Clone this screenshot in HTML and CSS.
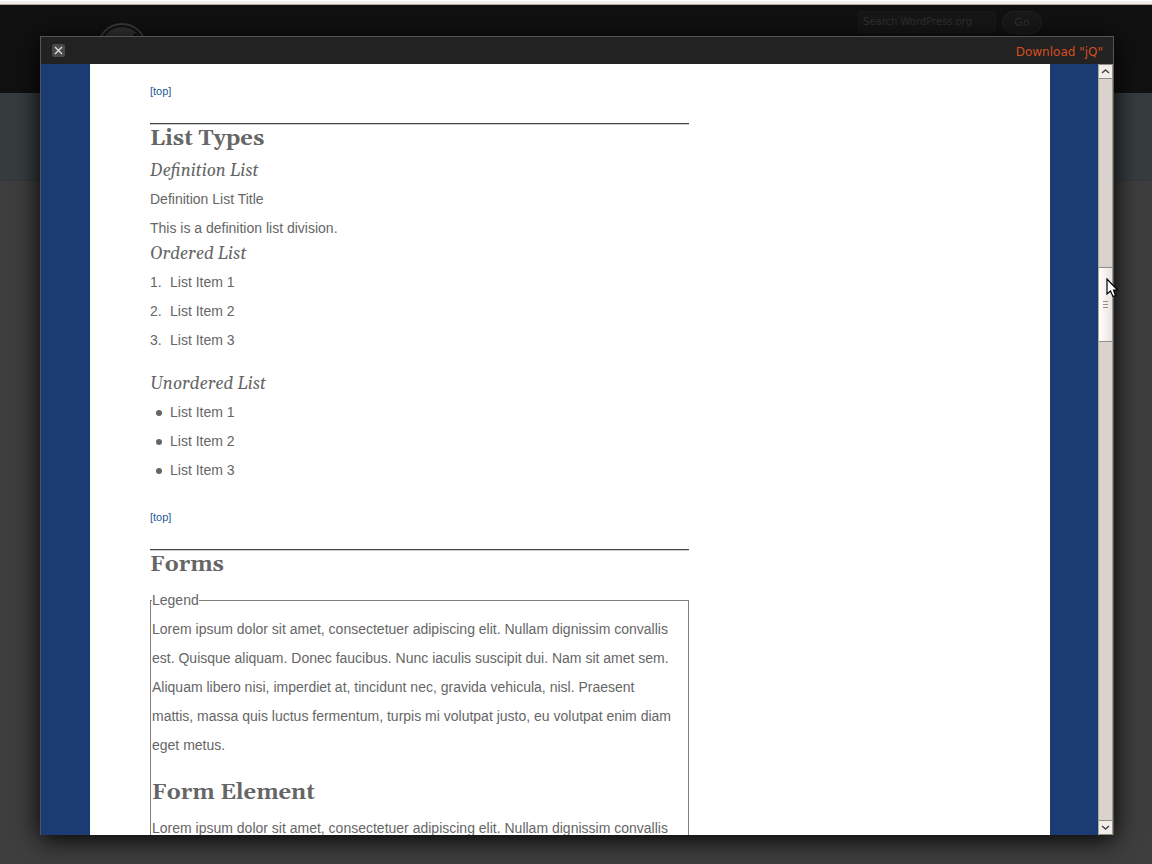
FILE: index.html
```
<!DOCTYPE html>
<html lang="en">
<head>
  <meta charset="UTF-8">
  <meta name="viewport" content="width=device-width, initial-scale=1.0">
  <title>Theme Preview</title>
  <link rel="stylesheet" href="styles.css">
</head>
<body>

  <!-- Site behind the preview -->
  <header class="site-header">
    <svg class="logo" viewBox="0 0 50 50" aria-hidden="true">
      <circle cx="25" cy="25" r="24" fill="#111" stroke="#3a3a3a" stroke-width="2"/>
      <circle cx="25" cy="25" r="21" fill="#333"/>
      <path d="M36 12 q3-3 5 0 l3 10 h-6 z" fill="#111"/>
    </svg>
    <form class="search">
      <input type="text" placeholder="Search WordPress.org" aria-label="Search WordPress.org">
      <button type="button">Go</button>
    </form>
  </header>
  <div class="site-headline"></div>

  <!-- Preview window -->
  <div class="preview">
    <div class="preview-bar">
      <button class="close-btn" type="button" aria-label="Close">
        <svg viewBox="0 0 13 13"><path d="M3 3 L10 10 M10 3 L3 10" stroke="#ddd" stroke-width="1.400" fill="none"/></svg>
      </button>
      <a class="download" href="#">Download "jQ"</a>
    </div>

    <div class="frame">
      <div class="viewport">
        <div class="page">
          <main class="content">
            <p class="top"><a href="#">[top]</a></p>
            <hr>
            <h2>List Types</h2>

            <h3>Definition List</h3>
            <dl>
              <dt>Definition List Title</dt>
              <dd>This is a definition list division.</dd>
            </dl>

            <h3>Ordered List</h3>
            <ol>
              <li>List Item 1</li>
              <li>List Item 2</li>
              <li>List Item 3</li>
            </ol>

            <h3>Unordered List</h3>
            <ul>
              <li>List Item 1</li>
              <li>List Item 2</li>
              <li>List Item 3</li>
            </ul>

            <p class="top"><a href="#">[top]</a></p>
            <hr>
            <h2>Forms</h2>

            <fieldset>
              <legend>Legend</legend>
              <p>Lorem ipsum dolor sit amet, consectetuer adipiscing elit. Nullam dignissim convallis est. Quisque aliquam. Donec faucibus. Nunc iaculis suscipit dui. Nam sit amet sem. Aliquam libero nisi, imperdiet at, tincidunt nec, gravida vehicula, nisl. Praesent mattis, massa quis luctus fermentum, turpis mi volutpat justo, eu volutpat enim diam eget metus.</p>
              <h2>Form Element</h2>
              <p>Lorem ipsum dolor sit amet, consectetuer adipiscing elit. Nullam dignissim convallis</p>
            </fieldset>
          </main>
        </div>
      </div>

      <div class="scrollbar">
        <button class="arrow" type="button" aria-label="Scroll up">
          <svg viewBox="0 0 9 9"><path d="M1 6 L4.500 3 L8 6" stroke="#444" stroke-width="1.500" fill="none"/></svg>
        </button>
        <div class="track-above"></div>
        <div class="thumb">
          <span></span><span></span><span></span>
          <svg class="cursor" viewBox="0 0 14 20" aria-hidden="true">
            <path d="M1 1 V16 L4.500 13 L7 18.500 L9.500 17.500 L7.500 12 H11.500 Z" fill="#fff" stroke="#000" stroke-width="1.200"/>
          </svg>
        </div>
        <div class="track-below"></div>
        <button class="arrow" type="button" aria-label="Scroll down">
          <svg viewBox="0 0 9 9"><path d="M1 3 L4.500 6 L8 3" stroke="#444" stroke-width="1.500" fill="none"/></svg>
        </button>
      </div>
    </div>
  </div>

</body>
</html>
```
FILE: styles.css
```
* {
  box-sizing: border-box;
}

html {
  overflow: hidden;
  border-top: 1px solid #fff;
  background: #3e3e3e;
}

body {
  margin: 0;
  border-top: 3px solid #f1efeb;
  font-family: "Liberation Sans", Arial, sans-serif;
}

/* Site behind the preview */
.site-header {
  display: flex;
  justify-content: space-between;
  align-items: flex-start;
  height: 89px;
  padding: 6px 110px 0 97px;
  background: #111;
  border-top: 1px solid #b5a899;
}

.logo {
  width: 50px;
  height: 50px;
  margin-top: 12px;
}

.search {
  display: flex;
  gap: 6px;
}

.search input {
  width: 138px;
  height: 22px;
  padding: 0 4px 2px;
  background: #161616;
  border: 1px solid #191919;
  border-radius: 2px;
  font: 10px "DejaVu Sans", sans-serif;
}

.search input::placeholder {
  color: #303030;
}

.search button {
  width: 40px;
  height: 23px;
  padding: 0;
  background: #181818;
  border: 1px solid #222;
  border-radius: 12px;
  color: #303030;
  font: 11px "DejaVu Sans", sans-serif;
}

.site-headline {
  height: 88px;
  background: #373c3f;
  border-bottom: 1px solid #31373b;
}

/* Preview window */
.preview {
  position: absolute;
  top: 36px;
  right: 38px;
  bottom: 29px;
  left: 40px;
  display: flex;
  flex-direction: column;
  border: 1px solid #555;
  border-bottom: none;
  box-shadow: 0 4px 24px #000;
}

.preview-bar {
  display: flex;
  flex: none;
  justify-content: space-between;
  align-items: center;
  height: 27px;
  padding: 0 10px 0 11px;
  background: #222;
}

.close-btn {
  width: 13px;
  height: 13px;
  padding: 0;
  background: #4a4a4a;
  border: none;
  border-radius: 2px;
}

.close-btn svg {
  display: block;
}

.download {
  padding-top: 2px;
  color: #d54e21;
  font: 12px "DejaVu Sans", sans-serif;
  text-decoration: none;
}

.frame {
  display: flex;
  flex: 1;
  min-height: 0;
}

.viewport {
  flex: 1;
  padding-left: 1px;
  overflow: hidden;
  background: #1a3c73;
}

.page {
  max-width: 960px;
  min-height: 100%;
  margin: 0 auto;
  padding: 13px 60px;
  background: #fff;
}

.content {
  max-width: 539px;
  color: #666;
  font-size: 14px;
  line-height: 29px;
}

.content p {
  margin: 0 0 19px;
}

.content .top {
  margin-bottom: 17px;
  font-size: 11px;
}

.top a {
  color: #1c5a96;
  text-decoration: none;
}

hr {
  height: 2px;
  margin: 0;
  border: none;
  border-top: 1px solid #444;
  border-bottom: 1px solid #ccc;
}

h2 {
  margin: 0 0 8px;
  padding-top: 1px;
  font: bold 22px/26px Georgia, Gelasio, "Liberation Serif", serif;
}

h3 {
  margin: 0 0 2px;
  font: italic 17px/23px Georgia, Gelasio, "Liberation Serif", serif;
}

dl,
dd {
  margin: 0;
}

ol,
ul {
  margin: 0 0 18px;
  padding: 0;
  list-style: none;
}

ol {
  counter-reset: item;
}

li {
  display: flex;
  align-items: center;
}

ol li::before {
  content: counter(item) ".";
  counter-increment: item;
  width: 20px;
}

ul li::before {
  content: "";
  width: 6px;
  height: 6px;
  margin: 0 8px 0 6px;
  border-radius: 50%;
  background: #666;
}

fieldset {
  margin: 0;
  padding: 0 1px;
  border: 1px solid #857f79;
}

fieldset p {
  padding-right: 10px;
}

legend {
  padding: 0;
}

/* Scrollbar */
.scrollbar {
  display: flex;
  flex-direction: column;
  width: 15px;
  background: #dad2cd;
  border-left: 1px solid #b5a79b;
  border-right: 1px solid #a0968c;
}

.arrow {
  flex: none;
  height: 15px;
  padding: 2px;
  background: #f0eeeb;
  border: 1px solid #958b80;
  border-width: 1px 0;
}

.arrow svg {
  display: block;
  width: 9px;
  height: 9px;
}

.track-above {
  flex: 188;
}

.track-below {
  flex: 478;
}

.thumb {
  position: relative;
  display: flex;
  flex-direction: column;
  flex: none;
  justify-content: center;
  align-items: center;
  gap: 2px;
  height: 75px;
  background: linear-gradient(to right, #fff, #e8e3df);
  border: 1px solid #958b80;
  border-width: 1px 0;
}

.thumb span {
  width: 5px;
  height: 1px;
  background: #958b80;
}

.cursor {
  position: absolute;
  top: 10px;
  left: 7px;
  width: 14px;
  height: 20px;
}
```
